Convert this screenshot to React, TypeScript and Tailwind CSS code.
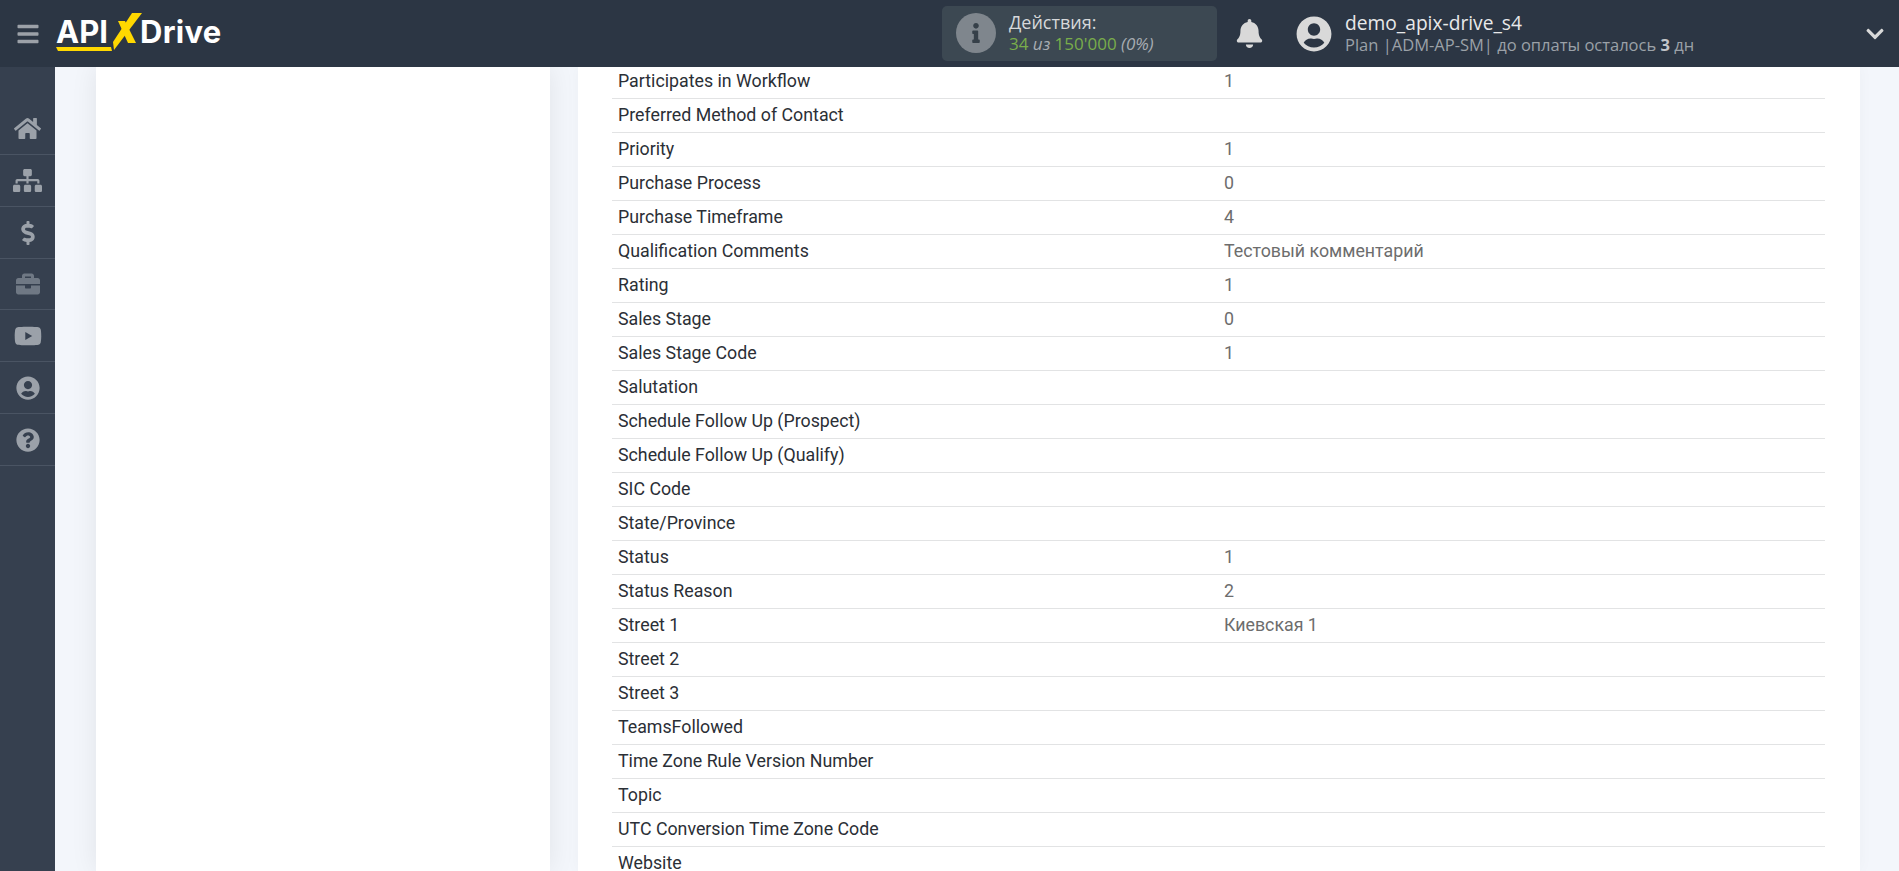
import React from "react";
import {
  FaBars,
  FaBell,
  FaBriefcase,
  FaChevronDown,
  FaDollarSign,
  FaHome,
  FaInfo,
  FaQuestionCircle,
  FaSitemap,
  FaUserCircle,
  FaYoutube,
} from "react-icons/fa";

const rows: [string, string][] = [
  ["Participates in Workflow", "1"],
  ["Preferred Method of Contact", ""],
  ["Priority", "1"],
  ["Purchase Process", "0"],
  ["Purchase Timeframe", "4"],
  ["Qualification Comments", "Тестовый комментарий"],
  ["Rating", "1"],
  ["Sales Stage", "0"],
  ["Sales Stage Code", "1"],
  ["Salutation", ""],
  ["Schedule Follow Up (Prospect)", ""],
  ["Schedule Follow Up (Qualify)", ""],
  ["SIC Code", ""],
  ["State/Province", ""],
  ["Status", "1"],
  ["Status Reason", "2"],
  ["Street 1", "Киевская 1"],
  ["Street 2", ""],
  ["Street 3", ""],
  ["TeamsFollowed", ""],
  ["Time Zone Rule Version Number", ""],
  ["Topic", ""],
  ["UTC Conversion Time Zone Code", ""],
  ["Website", ""],
];

const Logo = () => (
  <div className="relative w-[170px] h-[46px] font-['Inter',sans-serif] font-bold text-white text-[31px] leading-none">
    <span className="absolute left-[1px] top-[5px]">API</span>
    <span className="absolute left-[85px] top-[5px] tracking-[0.3px]">Drive</span>
    <svg className="absolute left-0 top-0" width="170" height="46" viewBox="0 0 170 46">
      <path d="M1 36 H56 L57 40 H3 Z" fill="#ffd800" />
      <path d="M77 2 H87 L59 39 L58 31 Z" fill="#ffd800" />
      <path d="M63 10 H70 L81 32 H73 Z" fill="#ffd800" />
    </svg>
  </div>
);

const Header = () => (
  <header className="h-[67px] shrink-0 bg-[#2c3644] flex items-center font-['Open_Sans',sans-serif]">
    <div className="w-[55px] flex justify-center text-[#9ca1a8]">
      <FaBars size={24} />
    </div>
    <Logo />
    <div className="ml-[717px] -mt-[1px] w-[275px] h-[55px] rounded-[5px] bg-[#3c4852] flex items-center pl-[14px]">
      <div className="w-10 h-10 rounded-full bg-[#7f868d] flex items-center justify-center text-[#364049]">
        <FaInfo size={20} />
      </div>
      <div className="ml-[13px] leading-[22px] whitespace-nowrap">
        <div className="text-[18px] text-[#d6d8da]">Действия:</div>
        <div className="text-[17px] text-[#79ad4b]">
          34 <i className="text-[#a8adb2]">из</i> 150'000 <i className="text-[#a8adb2]">(0%)</i>
        </div>
      </div>
    </div>
    <div className="ml-[18px] text-[#d9d9d9]">
      <FaBell size={29} />
    </div>
    <div className="ml-[32px] text-[#d9d9d9]">
      <FaUserCircle size={36} />
    </div>
    <div className="ml-[13px] leading-[22px] whitespace-nowrap">
      <div className="text-[19.2px] text-[#e8e9ea]">demo_apix-drive_s4</div>
      <div className="text-[16.5px] text-[#9ba1a8]">
        Plan |ADM-AP-SM| до оплаты осталось <b className="text-[#c3c6ca]">3</b> дн
      </div>
    </div>
    <div className="ml-auto mr-[14px] text-[#d9d9d9]">
      <FaChevronDown size={20} />
    </div>
  </header>
);

const navItems = [
  { icon: <FaHome size={27} />, cls: "text-[#9ba1a9] h-[88px] pt-[36px]" },
  { icon: <FaSitemap size={29} />, cls: "text-[#9ba1a9] h-[52px]" },
  { icon: <FaDollarSign size={24} />, cls: "text-[#9ba1a9] h-[52px]" },
  { icon: <FaBriefcase size={24} />, cls: "text-[#6f7884] h-[51px]" },
  { icon: <FaYoutube size={28} />, cls: "text-[#9ba1a9] h-[52px]" },
  { icon: <FaUserCircle size={24} />, cls: "text-[#9ba1a9] h-[52px]" },
  { icon: <FaQuestionCircle size={24} />, cls: "text-[#9ba1a9] h-[52px]" },
];

const Sidebar = () => (
  <aside className="w-[55px] shrink-0 bg-[#36404f]">
    {navItems.map((item, i) => (
      <div
        key={i}
        className={`flex items-center justify-center border-b border-[#4a5463] ${item.cls}`}
      >
        {item.icon}
      </div>
    ))}
  </aside>
);

export default function App() {
  return (
    <div className="h-[871px] overflow-hidden flex flex-col bg-[#f3f6fb]">
      <Header />
      <div className="flex flex-1 min-h-0">
        <Sidebar />
        <main className="flex-1 flex pl-[41px] gap-[28px] overflow-hidden">
          <section className="w-[454px] bg-white shadow-[0_0_25px_rgba(0,0,0,0.08)]" />
          <section className="w-[1282px] bg-white shadow-[0_0_15px_rgba(0,0,0,0.03)] pl-[34px] pr-[35px] -mt-[2px]">
            {rows.map(([name, value]) => (
              <div
                key={name}
                className="h-[34px] flex items-center border-b border-[#e2e3e4] font-['Roboto',sans-serif] text-[17.8px]"
              >
                <div className="w-[612px] pl-[6px] text-[#2b2f36]">{name}</div>
                <div className="text-[#6d6d6d]">{value}</div>
              </div>
            ))}
          </section>
        </main>
      </div>
    </div>
  );
}
